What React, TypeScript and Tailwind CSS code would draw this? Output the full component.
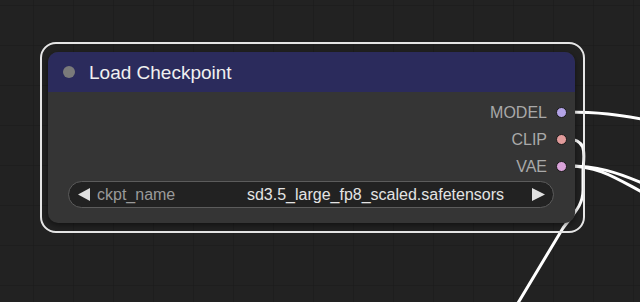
import { ReactNode } from 'react';

const outputs = [
  { name: 'MODEL', color: 'bg-[#b3a3e6]' },
  { name: 'CLIP', color: 'bg-[#e29c9c]' },
  { name: 'VAE', color: 'bg-[#d9a3d9]' },
];

function Canvas({ children }: { children: ReactNode }) {
  return (
    <div className="relative w-[640px] h-[302px] overflow-hidden bg-[#222222]">
      <svg className="absolute inset-0" width="640" height="302">
        <defs>
          <pattern id="grid" width="40" height="40" patternUnits="userSpaceOnUse" x="-7" y="5">
            <path d="M0 0 H40 M0 0 V40" stroke="#1a1a1a" strokeWidth="1.2" fill="none" />
          </pattern>
        </defs>
        <rect width="640" height="302" fill="url(#grid)" />
        <g stroke="#ffffff" strokeWidth="3" fill="none" strokeLinecap="round">
          <path d="M567 112 C 600 112, 618 115, 642 119" />
          <path d="M567 139 C 588 139, 584 155, 583 170 L 583 190 C 583 205, 575 212, 563 228 L 515 308" />
          <path d="M567 166 C 598 166, 616 172, 642 183" />
          <path d="M567 166 C 598 166, 614 177, 642 192" />
        </g>
      </svg>
      {children}
    </div>
  );
}

export default function App() {
  return (
    <Canvas>
      <div
        className="relative ml-[40px] mt-[42px] w-[545px] rounded-[16px] border-2 border-[#e6e6e6] pt-[8px] pl-[6px] pr-[8px] pb-[8px]"
        style={{ fontFamily: '"Liberation Sans", Arial, sans-serif' }}
      >
        <div className="w-[527px] h-[171px] rounded-[10px] overflow-hidden bg-[#353535] shadow-[0_2px_6px_rgba(0,0,0,0.5)]">
          {/* title */}
          <div className="h-[40px] bg-[#2b2b5c] flex items-center pl-[15px]">
            <div className="w-[12px] h-[12px] rounded-full bg-[#7a7a7a]" />
            <span className="ml-[14px] text-[19px] text-[#f0f0f0] leading-none">Load Checkpoint</span>
          </div>

          {/* outputs */}
          <div className="pt-[7px] flex flex-col items-end pr-[8px]">
            {outputs.map((o) => (
              <div key={o.name} className="h-[27px] flex items-center gap-[9px]">
                <span className="text-[16px] text-[#a9a9a9] leading-none">{o.name}</span>
                <div className={`w-[11px] h-[11px] rounded-full border border-[#1a1a1a] ${o.color}`} />
              </div>
            ))}
          </div>

          {/* widget */}
          <div className="mt-[1px] ml-[20px] w-[486px] h-[27px] rounded-full bg-[#222222] border border-[#5c5c5c] flex items-center pl-[9px] pr-[8px]">
            <svg width="12" height="13" viewBox="0 0 12 13">
              <path d="M0 6.5 L12 0 L12 13 Z" fill="#e0e0e0" />
            </svg>
            <span className="ml-[7px] text-[16px] text-[#9a9a9a] leading-none">ckpt_name</span>
            <span className="flex-1 text-right text-[16px] text-[#e4e4e4] leading-none mr-[28px]">
              sd3.5_large_fp8_scaled.safetensors
            </span>
            <svg width="13" height="13" viewBox="0 0 13 13">
              <path d="M13 6.5 L0 0 L0 13 Z" fill="#e0e0e0" />
            </svg>
          </div>
        </div>
      </div>
    </Canvas>
  );
}
